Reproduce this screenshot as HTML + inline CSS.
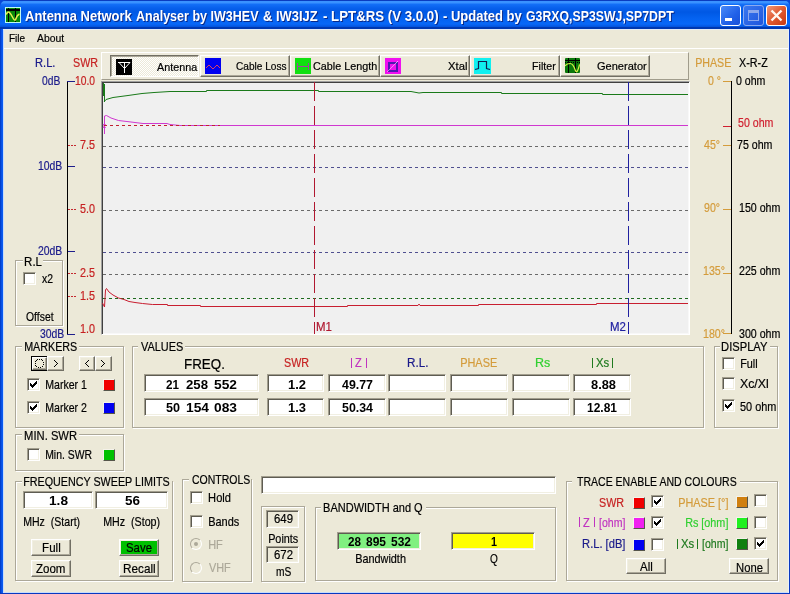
<!DOCTYPE html>
<html><head><meta charset="utf-8">
<style>
*{margin:0;padding:0;box-sizing:border-box}
html,body{width:790px;height:594px;overflow:hidden;background:#ECE9D8}
body{position:relative;font-family:"Liberation Sans",sans-serif;font-size:11px;color:#000}
.a{position:absolute}
svg text{font-family:"Liberation Sans",sans-serif}
#txt{will-change:transform}
.gb{position:absolute;border:1px solid #ACA899;box-shadow:inset 1px 1px 0 #fff,1px 1px 0 #fff}
.gc{position:absolute;background:#ECE9D8;height:4px}
.sk{position:absolute;background:#fff;border-style:solid;border-width:1px;border-color:#A29E8E #fff #fff #A29E8E;box-shadow:inset 1px 1px 0 #5E5C52,inset -1px -1px 0 #F1EFE2}
.bt{position:absolute;background:#ECE9D8;border-style:solid;border-width:1px;border-color:#fff #716F64 #716F64 #fff;box-shadow:inset -1px -1px 0 #ACA899,inset 1px 1px 0 #F1EFE2}
.cb{position:absolute;width:13px;height:13px;background:#fff;border-style:solid;border-width:1px;border-color:#A29E8E #fff #fff #A29E8E;box-shadow:inset 1px 1px 0 #5E5C52,inset -1px -1px 0 #F1EFE2}
.sw{position:absolute;width:12px;height:12px;border-style:solid;border-width:1px;border-color:#F4F2EA #55554A #55554A #F4F2EA}
</style></head><body>

<!-- window frame -->
<div class="a" style="left:0;top:0;width:790px;height:594px;background:#0848D8"></div>
<div class="a" style="left:0;top:29px;width:3px;height:565px;background:linear-gradient(90deg,#0036C0,#0A5AF0 2px)"></div>
<div class="a" style="left:3px;top:29px;width:1px;height:564px;background:#C8DCFA"></div>
<div class="a" style="left:3px;top:592px;width:786px;height:1px;background:#C8DCFA"></div>
<div class="a" style="left:788px;top:29px;width:1px;height:564px;background:#E8F0FA"></div>
<div class="a" style="left:0;top:593px;width:790px;height:1px;background:#0838C0"></div>
<div class="a" style="left:789px;top:29px;width:1px;height:565px;background:#0838C0"></div>
<div class="a" style="left:4px;top:29px;width:784px;height:563px;background:#ECE9D8"></div>
<div class="a" style="left:3px;top:29px;width:786px;height:1px;background:#E4ECF8"></div>

<!-- title bar -->
<div class="a" style="left:0;top:0;width:790px;height:29px;border-radius:7px 7px 0 0;background:linear-gradient(#0A3CC0 0,#0A3CC0 1px,#3A92FF 1px,#3A92FF 3px,#1470F8 4px,#0860EC 8px,#0058E4 12px,#0462F0 18px,#0868F8 24px,#0456E0 26.5px,#0038B0 27px,#0038B0 29px)"></div>
<!-- app icon -->
<svg class="a" style="left:5px;top:7px" width="16" height="16" shape-rendering="crispEdges"><rect x="0" y="0" width="16" height="16" fill="#C0F8F0"/><rect x="1" y="1" width="14" height="14" fill="#0A8A0A"/><path d="M3 1h1v14h-1zM10 1h1v14h-1zM1 2h14v2h-14z" fill="#000"/></svg>
<svg class="a" style="left:5px;top:7px" width="16" height="16"><path d="M1 7.5Q3 4 4.5 5.5T8 11T11 11.5T14.5 7" stroke="#E8F050" fill="none" stroke-width="1.5"/></svg>
<!-- title buttons -->
<div class="a" style="left:720px;top:5px;width:21px;height:21px;border:1px solid #fff;border-radius:3px;background:linear-gradient(135deg,#4A8AF8,#2060E8 60%,#1850D8)"></div>
<div class="a" style="left:725px;top:18px;width:7px;height:3px;background:#fff"></div>
<div class="a" style="left:743px;top:5px;width:21px;height:21px;border:1px solid #8AAAF0;border-radius:3px;background:linear-gradient(135deg,#3A78F0,#1E55DC)"></div>
<div class="a" style="left:748px;top:10px;width:11px;height:11px;border:1px solid #8CA8EC;border-top-width:3px"></div>
<div class="a" style="left:766px;top:5px;width:21px;height:21px;border:1px solid #fff;border-radius:3px;background:linear-gradient(135deg,#F09878,#E05A30 50%,#C83810)"></div>
<svg class="a" style="left:766px;top:5px" width="21" height="21"><path d="M5.5 5.5L15.5 15.5M15.5 5.5L5.5 15.5" stroke="#FFF8F0" stroke-width="2.4"/></svg>

<!-- menu separator -->
<div class="a" style="left:4px;top:48px;width:784px;height:1px;background:#fff"></div>

<!-- ===== CHART LEFT AXIS ===== -->
<div class="a" style="left:67px;top:81px;width:1px;height:254px;background:#000"></div>
<div class="a" style="left:67px;top:81px;width:8px;height:1px;background:#1E1E8C"></div>
<div class="a" style="left:68px;top:166px;width:7px;height:1px;background:#1E1E8C"></div>
<div class="a" style="left:68px;top:251px;width:7px;height:1px;background:#1E1E8C"></div>
<div class="a" style="left:67px;top:334px;width:8px;height:1px;background:#1E1E8C"></div>
<svg class="a" style="left:67px;top:140px" width="10" height="170"><g stroke="#C42A30" stroke-width="1" stroke-dasharray="2 1"><path d="M1 5.5H9M1 69.5H9M1 133.5H9M1 156.5H9"/></g></svg>

<!-- R.L offset group -->
<div class="gb" style="left:15px;top:260px;width:48px;height:66px"></div>
<div class="gc" style="left:23px;top:259px;width:20px"></div>
<div class="cb" style="left:23px;top:272px"></div>

<!-- toolbar -->
<div class="a" style="left:101px;top:52px;width:588px;height:28px;border-style:solid;border-width:1px;border-color:#FFFFFF #A09C8C #A09C8C #FFFFFF;background:#EEEBDD"></div>
<div class="a" style="left:110px;top:55px;width:89px;height:22px;border-style:solid;border-width:1px;border-color:#716F64 #fff #fff #716F64;box-shadow:inset 1px 1px 0 #ACA899;background:repeating-conic-gradient(#fff 0 25%,#ECE9D8 0 50%) 0 0/2px 2px"></div>
<div class="bt" style="left:200px;top:55px;width:90px;height:22px"></div>
<div class="bt" style="left:290px;top:55px;width:90px;height:22px"></div>
<div class="bt" style="left:380px;top:55px;width:90px;height:22px"></div>
<div class="bt" style="left:470px;top:55px;width:90px;height:22px"></div>
<div class="bt" style="left:560px;top:55px;width:90px;height:22px"></div>
<!-- icons -->
<svg class="a" style="left:116px;top:59px" width="16" height="16"><rect width="16" height="16" fill="#000"/><path d="M2 3.5H14M8.5 3V14M3 3.5L8.5 9.5L14 3.5" stroke="#fff" fill="none" stroke-width="1"/></svg>
<svg class="a" style="left:205px;top:58px" width="16" height="16"><rect width="16" height="16" fill="#0000F0"/><path d="M1 10L4 7L8 11L12 7L15 10" stroke="#E04060" fill="none" stroke-width="1"/></svg>
<svg class="a" style="left:295px;top:58px" width="16" height="16"><rect width="16" height="16" fill="#10E010"/><path d="M2.5 5V12M13.5 5V12M2 8.5H14" stroke="#A040A0" fill="none" stroke-width="1"/></svg>
<svg class="a" style="left:385px;top:58px" width="16" height="16"><rect width="16" height="16" fill="#F010F0"/><rect x="4" y="5" width="8" height="8" fill="none" stroke="#5018B0" stroke-width="2"/><path d="M2.5 13.5L13 3" stroke="#FFE8FF" stroke-width="1" stroke-dasharray="1 0.5"/></svg>
<svg class="a" style="left:474px;top:58px" width="17" height="16"><rect width="17" height="16" fill="#10F0F0"/><path d="M1 11.5L4.5 10.5V3.5H12.5V10.5L16 11.5" stroke="#102050" fill="none" stroke-width="1.2"/></svg>
<svg class="a" style="left:565px;top:58px" width="15" height="15"><rect width="15" height="15" rx="1" fill="#0A780A"/><path d="M3.5 0V15M10.5 0V15M0 2.5H15" stroke="#000" stroke-width="1"/><path d="M0 4.5H15" stroke="#000" stroke-width="1" stroke-dasharray="1 1"/><path d="M0 8Q2 5.5 5 5.5T10 11.5T14.5 6.5" stroke="#D8F048" fill="none" stroke-width="1.2"/></svg>

<!-- plot -->
<div class="a" style="left:101px;top:81px;width:589px;height:254px;border-style:solid;border-width:1px;border-color:#A0A0A0 #fff #fff #A0A0A0;box-shadow:inset 1px 1px 0 #404040,inset -1px -1px 0 #F8F8F8;background:#F0F0F0"></div>
<svg class="a" style="left:0;top:0" width="790" height="594" shape-rendering="crispEdges">
<g stroke-width="1" fill="none" stroke-dasharray="3 3">
<path d="M103 146.5H688" stroke="#6A6A6A"/>
<path d="M103 167.5H688" stroke="#505090"/>
<path d="M103 210.5H688" stroke="#6A6A6A"/>
<path d="M103 252.5H688" stroke="#505090"/>
<path d="M103 274.5H688" stroke="#6A6A6A"/>
<path d="M103 298.5H688" stroke="#1E6A1E"/>
</g>
</svg>
<svg class="a" style="left:0;top:0" width="790" height="594">
<g stroke-width="1" fill="none" stroke-linejoin="miter">
<path d="M103.5 83V96M104.5 84V102M104 102L106 99.5L113 97.5L128 95.5L142 93.5L154 92.5L170 91.5H206.5V90.5H318.5V91.5H411L419 93L423 92.5H501.5V93.5H602.5V94.5H688" stroke="#1A7A1A"/>
<path d="M104.5 134V116L106.5 115.5L111 118L118.5 120.5L131 122L143 123.5L167 123.5L170 124.5L180 125.5H688M103 124L105.5 128M105.5 124L103 128" stroke="#D038D0"/>
<path d="M102.5 303L104.5 307L105.5 290L106.5 288.5L109 292L113 295L118.5 298L124 299.5L129 301.5L135 302.5L142.5 303.5L152.5 304.5H167.5V305.5H200.5V306.5H347.5V305.5H418L419 304L420 305.5H478.5V304.5H596.5V303.5H688" stroke="#C81E30"/>
</g>
<path d="M104 125.5H220" stroke="#C02030" stroke-dasharray="3 3" shape-rendering="crispEdges"/>
<g stroke-width="1" fill="none" stroke-dasharray="19 5" shape-rendering="crispEdges">
<path d="M314.5 82V334" stroke="#B01830"/>
<path d="M628.5 82V334" stroke="#2020A0"/>
</g>
</svg>

<!-- ===== RIGHT AXIS ===== -->
<div class="a" style="left:731px;top:81px;width:1px;height:253px;background:#000"></div>
<div class="a" style="left:723px;top:81px;width:8px;height:1px;background:#D49C3C"></div>
<div class="a" style="left:723px;top:145px;width:8px;height:1px;background:#D49C3C"></div>
<div class="a" style="left:723px;top:209px;width:8px;height:1px;background:#D49C3C"></div>
<div class="a" style="left:723px;top:273px;width:8px;height:1px;background:#D49C3C"></div>
<div class="a" style="left:723px;top:333px;width:8px;height:1px;background:#D49C3C"></div>
<div class="a" style="left:723px;top:126px;width:8px;height:1px;background:#D02030"></div>

<!-- ===== MARKERS ===== -->
<div class="gb" style="left:15px;top:346px;width:109px;height:82px"></div>
<div class="gc" style="left:22px;top:345px;width:57px"></div>
<div class="a" style="left:31px;top:356px;width:17px;height:15px;border:1px solid #000;background:#ECE9D8"></div>
<div class="bt" style="left:32px;top:357px;width:15px;height:13px"></div>
<div class="bt" style="left:47px;top:356px;width:17px;height:15px"></div>
<div class="bt" style="left:79px;top:356px;width:16px;height:15px"></div>
<div class="bt" style="left:95px;top:356px;width:17px;height:15px"></div>
<svg class="a" style="left:0;top:0" width="130" height="380" shape-rendering="crispEdges"><path d="M54 360h1v1h-1zM55 361h1v1h-1zM56 362h1v1h-1zM57 363h1v1h-1zM56 364h1v1h-1zM55 365h1v1h-1zM54 366h1v1h-1zM88 360h1v1h-1zM87 361h1v1h-1zM86 362h1v1h-1zM85 363h1v1h-1zM86 364h1v1h-1zM87 365h1v1h-1zM88 366h1v1h-1zM101 360h1v1h-1zM102 361h1v1h-1zM103 362h1v1h-1zM104 363h1v1h-1zM103 364h1v1h-1zM102 365h1v1h-1zM101 366h1v1h-1zM37 359h1v1h-1zM39 359h1v1h-1zM41 359h1v1h-1zM35 361h1v1h-1zM36 360h1v1h-1zM42 360h1v1h-1zM43 362h1v1h-1zM43 364h1v1h-1zM35 363h1v1h-1zM35 365h1v1h-1zM36 366h1v1h-1zM42 366h1v1h-1zM38 367h1v1h-1zM40 367h1v1h-1z" fill="#000"/></svg>
<div class="cb" style="left:27px;top:378px"></div>
<div class="cb" style="left:27px;top:401px"></div>
<div class="sw" style="left:103px;top:379px;background:#F00000"></div>
<div class="sw" style="left:103px;top:402px;background:#0000F0"></div>

<!-- MIN SWR -->
<div class="gb" style="left:15px;top:434px;width:109px;height:37px"></div>
<div class="gc" style="left:22px;top:433px;width:57px"></div>
<div class="cb" style="left:27px;top:448px"></div>
<div class="sw" style="left:103px;top:449px;background:#00C000"></div>

<!-- VALUES -->
<div class="gb" style="left:132px;top:346px;width:572px;height:82px"></div>
<div class="gc" style="left:138px;top:345px;width:47px"></div>
<div class="sk" style="left:144px;top:374px;width:115px;height:18px"></div>
<div class="sk" style="left:144px;top:398px;width:115px;height:18px"></div>
<div class="sk" style="left:267px;top:374px;width:57px;height:18px"></div>
<div class="sk" style="left:267px;top:398px;width:57px;height:18px"></div>
<div class="sk" style="left:328px;top:374px;width:58px;height:18px"></div>
<div class="sk" style="left:328px;top:398px;width:58px;height:18px"></div>
<div class="sk" style="left:388px;top:374px;width:58px;height:18px"></div>
<div class="sk" style="left:388px;top:398px;width:58px;height:18px"></div>
<div class="sk" style="left:450px;top:374px;width:58px;height:18px"></div>
<div class="sk" style="left:450px;top:398px;width:58px;height:18px"></div>
<div class="sk" style="left:512px;top:374px;width:58px;height:18px"></div>
<div class="sk" style="left:512px;top:398px;width:58px;height:18px"></div>
<div class="sk" style="left:573px;top:374px;width:58px;height:18px"></div>
<div class="sk" style="left:573px;top:398px;width:58px;height:18px"></div>

<!-- DISPLAY -->
<div class="gb" style="left:714px;top:346px;width:64px;height:82px"></div>
<div class="gc" style="left:720px;top:345px;width:50px"></div>
<div class="cb" style="left:722px;top:357px"></div>
<div class="cb" style="left:722px;top:377px"></div>
<div class="cb" style="left:722px;top:399px"></div>

<!-- FREQUENCY SWEEP LIMITS -->
<div class="gb" style="left:15px;top:481px;width:158px;height:100px"></div>
<div class="gc" style="left:22px;top:480px;width:150px"></div>
<div class="sk" style="left:23px;top:491px;width:70px;height:18px"></div>
<div class="sk" style="left:95px;top:491px;width:73px;height:18px"></div>
<div class="bt" style="left:31px;top:539px;width:40px;height:17px"></div>
<div class="bt" style="left:31px;top:560px;width:40px;height:17px"></div>
<div class="bt" style="left:119px;top:539px;width:40px;height:17px;background:#00C000"></div>
<div class="bt" style="left:119px;top:560px;width:40px;height:17px"></div>

<!-- CONTROLS -->
<div class="gb" style="left:182px;top:479px;width:70px;height:103px"></div>
<div class="gc" style="left:189px;top:478px;width:62px"></div>
<div class="cb" style="left:190px;top:491px"></div>
<div class="cb" style="left:190px;top:515px"></div>
<div class="a" style="left:190px;top:538px;width:12px;height:12px;border-radius:50%;border:1px solid;border-color:#ACA899 #fff #fff #ACA899;background:#ECE9D8"></div>
<div class="a" style="left:194px;top:542px;width:4px;height:4px;border-radius:50%;background:#ACA899"></div>
<div class="a" style="left:190px;top:562px;width:12px;height:12px;border-radius:50%;border:1px solid;border-color:#ACA899 #fff #fff #ACA899;background:#ECE9D8"></div>

<!-- long textbox -->
<div class="sk" style="left:261px;top:476px;width:295px;height:18px"></div>

<!-- points -->
<div class="gb" style="left:261px;top:506px;width:44px;height:76px"></div>
<div class="sk" style="left:266px;top:510px;width:33px;height:18px;background:#ECE9D8"></div>
<div class="sk" style="left:266px;top:546px;width:33px;height:17px;background:#ECE9D8"></div>

<!-- BANDWIDTH -->
<div class="gb" style="left:315px;top:507px;width:241px;height:74px"></div>
<div class="gc" style="left:321px;top:506px;width:105px"></div>
<div class="sk" style="left:337px;top:532px;width:84px;height:18px;background:#80F080"></div>
<div class="sk" style="left:451px;top:532px;width:84px;height:18px;background:#FFFF00"></div>

<!-- TRACE ENABLE -->
<div class="gb" style="left:566px;top:481px;width:212px;height:100px"></div>
<div class="gc" style="left:572px;top:480px;width:168px"></div>
<div class="sw" style="left:633px;top:497px;background:#F00000"></div>
<div class="sw" style="left:633px;top:517px;background:#F020F0"></div>
<div class="sw" style="left:633px;top:539px;background:#0000F0"></div>
<div class="sw" style="left:736px;top:496px;background:#D08010"></div>
<div class="sw" style="left:736px;top:517px;background:#20F020"></div>
<div class="sw" style="left:736px;top:538px;background:#108010"></div>
<div class="cb" style="left:651px;top:495px"></div>
<div class="cb" style="left:651px;top:516px"></div>
<div class="cb" style="left:651px;top:538px"></div>
<div class="cb" style="left:754px;top:494px"></div>
<div class="cb" style="left:754px;top:516px"></div>
<div class="cb" style="left:754px;top:537px"></div>
<div class="bt" style="left:626px;top:558px;width:40px;height:16px"></div>
<div class="bt" style="left:729px;top:558px;width:40px;height:16px"></div>

<!-- check marks -->
<svg class="a" style="left:0;top:0" width="790" height="594" shape-rendering="crispEdges"><path transform="translate(30 381)" d="M6 0h1v1h-1zM5 1h2v1h-2zM0 2h1v1h-1zM4 2h3v1h-3zM0 3h2v1h-2zM3 3h3v1h-3zM0 4h5v1h-5zM1 5h3v1h-3zM2 6h1v1h-1z" fill="#000"/><path transform="translate(30 404)" d="M6 0h1v1h-1zM5 1h2v1h-2zM0 2h1v1h-1zM4 2h3v1h-3zM0 3h2v1h-2zM3 3h3v1h-3zM0 4h5v1h-5zM1 5h3v1h-3zM2 6h1v1h-1z" fill="#000"/><path transform="translate(725 402)" d="M6 0h1v1h-1zM5 1h2v1h-2zM0 2h1v1h-1zM4 2h3v1h-3zM0 3h2v1h-2zM3 3h3v1h-3zM0 4h5v1h-5zM1 5h3v1h-3zM2 6h1v1h-1z" fill="#000"/><path transform="translate(654 498)" d="M6 0h1v1h-1zM5 1h2v1h-2zM0 2h1v1h-1zM4 2h3v1h-3zM0 3h2v1h-2zM3 3h3v1h-3zM0 4h5v1h-5zM1 5h3v1h-3zM2 6h1v1h-1z" fill="#000"/><path transform="translate(654 519)" d="M6 0h1v1h-1zM5 1h2v1h-2zM0 2h1v1h-1zM4 2h3v1h-3zM0 3h2v1h-2zM3 3h3v1h-3zM0 4h5v1h-5zM1 5h3v1h-3zM2 6h1v1h-1z" fill="#000"/><path transform="translate(757 540)" d="M6 0h1v1h-1zM5 1h2v1h-2zM0 2h1v1h-1zM4 2h3v1h-3zM0 3h2v1h-2zM3 3h3v1h-3zM0 4h5v1h-5zM1 5h3v1h-3zM2 6h1v1h-1z" fill="#000"/></svg>

<!-- abs bars -->
<div class="a" style="left:351px;top:358px;width:1px;height:10px;background:#C034C0"></div>
<div class="a" style="left:366px;top:358px;width:1px;height:10px;background:#C034C0"></div>
<div class="a" style="left:592px;top:358px;width:1px;height:10px;background:#1F7A1F"></div>
<div class="a" style="left:612px;top:358px;width:1px;height:10px;background:#1F7A1F"></div>
<div class="a" style="left:579px;top:517px;width:1px;height:10px;background:#C034C0"></div>
<div class="a" style="left:594px;top:517px;width:1px;height:10px;background:#C034C0"></div>
<div class="a" style="left:677px;top:539px;width:1px;height:10px;background:#1F7A1F"></div>
<div class="a" style="left:697px;top:539px;width:1px;height:10px;background:#1F7A1F"></div>
<svg class="a" id="txt" style="left:0;top:0" width="790" height="594" xml:space="preserve"><text transform="translate(26.00 22) scale(0.9267 1)" style="font-size:14.03px;fill:#fff;stroke:#fff;stroke-width:0;font-weight:bold;fill:#0A2A8A">Antenna Network</text>
<text transform="translate(25.00 21) scale(0.9267 1)" style="font-size:14.03px;fill:#fff;stroke:#fff;stroke-width:0;font-weight:bold">Antenna Network</text>
<text transform="translate(137.00 22) scale(0.8930 1)" style="font-size:14.03px;fill:#fff;stroke:#fff;stroke-width:0;font-weight:bold;fill:#0A2A8A">Analyser by IW3HEV</text>
<text transform="translate(136.00 21) scale(0.8930 1)" style="font-size:14.03px;fill:#fff;stroke:#fff;stroke-width:0;font-weight:bold">Analyser by IW3HEV</text>
<text transform="translate(264.00 22) scale(0.9225 1)" style="font-size:14.03px;fill:#fff;stroke:#fff;stroke-width:0;font-weight:bold;fill:#0A2A8A">&amp; IW3IJZ</text>
<text transform="translate(263.00 21) scale(0.9225 1)" style="font-size:14.03px;fill:#fff;stroke:#fff;stroke-width:0;font-weight:bold">&amp; IW3IJZ</text>
<text transform="translate(324.00 22) scale(0.9457 1)" style="font-size:14.03px;fill:#fff;stroke:#fff;stroke-width:0;font-weight:bold;fill:#0A2A8A">- LPT&amp;RS (V 3.0.0)</text>
<text transform="translate(323.00 21) scale(0.9457 1)" style="font-size:14.03px;fill:#fff;stroke:#fff;stroke-width:0;font-weight:bold">- LPT&amp;RS (V 3.0.0)</text>
<text transform="translate(444.00 22) scale(0.9285 1)" style="font-size:14.03px;fill:#fff;stroke:#fff;stroke-width:0;font-weight:bold;fill:#0A2A8A">- Updated by</text>
<text transform="translate(443.00 21) scale(0.9285 1)" style="font-size:14.03px;fill:#fff;stroke:#fff;stroke-width:0;font-weight:bold">- Updated by</text>
<text transform="translate(527.00 22) scale(0.8774 1)" style="font-size:14.03px;fill:#fff;stroke:#fff;stroke-width:0;font-weight:bold;fill:#0A2A8A">G3RXQ,SP3SWJ,SP7DPT</text>
<text transform="translate(526.00 21) scale(0.8774 1)" style="font-size:14.03px;fill:#fff;stroke:#fff;stroke-width:0;font-weight:bold">G3RXQ,SP3SWJ,SP7DPT</text>
<text transform="translate(9.00 42) scale(0.9020 1)" style="font-size:11.13px;fill:#000;stroke:#000;stroke-width:0.2">File</text>
<text transform="translate(37.00 42) scale(0.9339 1)" style="font-size:11.13px;fill:#000;stroke:#000;stroke-width:0.2">About</text>
<text transform="translate(35.12 67) scale(0.8807 1)" style="font-size:12.58px;fill:#1A1A8A;stroke:#1A1A8A;stroke-width:0.2">R.L.</text>
<text transform="translate(73.00 67) scale(0.8544 1)" style="font-size:12.58px;fill:#C62222;stroke:#C62222;stroke-width:0.2">SWR</text>
<text transform="translate(42.00 85) scale(0.8185 1)" style="font-size:12.58px;fill:#1A1A8A;stroke:#1A1A8A;stroke-width:0.2">0dB</text>
<text transform="translate(38.00 170) scale(0.8280 1)" style="font-size:12.58px;fill:#1A1A8A;stroke:#1A1A8A;stroke-width:0.2">10dB</text>
<text transform="translate(38.00 255) scale(0.8280 1)" style="font-size:12.58px;fill:#1A1A8A;stroke:#1A1A8A;stroke-width:0.2">20dB</text>
<text transform="translate(40.00 338) scale(0.8280 1)" style="font-size:12.58px;fill:#1A1A8A;stroke:#1A1A8A;stroke-width:0.2">30dB</text>
<text transform="translate(75.00 85) scale(0.8168 1)" style="font-size:12.58px;fill:#C62222;stroke:#C62222;stroke-width:0.2">10.0</text>
<text transform="translate(80.00 149) scale(0.8576 1)" style="font-size:12.58px;fill:#C62222;stroke:#C62222;stroke-width:0.2">7.5</text>
<text transform="translate(80.00 213) scale(0.8576 1)" style="font-size:12.58px;fill:#C62222;stroke:#C62222;stroke-width:0.2">5.0</text>
<text transform="translate(80.00 277) scale(0.8576 1)" style="font-size:12.58px;fill:#C62222;stroke:#C62222;stroke-width:0.2">2.5</text>
<text transform="translate(80.00 300) scale(0.8576 1)" style="font-size:12.58px;fill:#C62222;stroke:#C62222;stroke-width:0.2">1.5</text>
<text transform="translate(80.00 333) scale(0.8576 1)" style="font-size:12.58px;fill:#C62222;stroke:#C62222;stroke-width:0.2">1.0</text>
<text transform="translate(24.08 266) scale(0.9151 1)" style="font-size:12.58px;fill:#000;stroke:#000;stroke-width:0.2">R.L</text>
<text transform="translate(42.00 283) scale(0.8277 1)" style="font-size:12.58px;fill:#000;stroke:#000;stroke-width:0.2">x2</text>
<text transform="translate(26.00 321) scale(0.8277 1)" style="font-size:12.58px;fill:#000;stroke:#000;stroke-width:0.2">Offset</text>
<text transform="translate(157.00 71) scale(0.9702 1)" style="font-size:11.13px;fill:#000;stroke:#000;stroke-width:0.2">Antenna</text>
<text transform="translate(236.00 70) scale(0.9092 1)" style="font-size:11.13px;fill:#000;stroke:#000;stroke-width:0.2">Cable Loss</text>
<text transform="translate(313.00 70) scale(0.9697 1)" style="font-size:11.13px;fill:#000;stroke:#000;stroke-width:0.2">Cable Length</text>
<text transform="translate(448.00 70) scale(1.0161 1)" style="font-size:11.13px;fill:#000;stroke:#000;stroke-width:0.2">Xtal</text>
<text transform="translate(532.00 70) scale(0.9594 1)" style="font-size:11.13px;fill:#000;stroke:#000;stroke-width:0.2">Filter</text>
<text transform="translate(597.00 70) scale(0.9924 1)" style="font-size:11.13px;fill:#000;stroke:#000;stroke-width:0.2">Generator</text>
<text transform="translate(316.09 331) scale(0.9103 1)" style="font-size:12.58px;fill:#B01830;stroke:#B01830;stroke-width:0.2">M1</text>
<text transform="translate(610.09 331) scale(0.9103 1)" style="font-size:12.58px;fill:#2020A0;stroke:#2020A0;stroke-width:0.2">M2</text>
<text transform="translate(695.15 67) scale(0.8484 1)" style="font-size:12.58px;fill:#D49C3C;stroke:#D49C3C;stroke-width:0.2">PHASE</text>
<text transform="translate(739.00 67) scale(0.8567 1)" style="font-size:12.58px;fill:#000;stroke:#000;stroke-width:0.2">X-R-Z</text>
<text transform="translate(708.00 85) scale(0.8393 1)" style="font-size:12.58px;fill:#D49C3C;stroke:#D49C3C;stroke-width:0.2">0 °</text>
<text transform="translate(704.00 149) scale(0.8425 1)" style="font-size:12.58px;fill:#D49C3C;stroke:#D49C3C;stroke-width:0.2">45°</text>
<text transform="translate(704.00 212) scale(0.8425 1)" style="font-size:12.58px;fill:#D49C3C;stroke:#D49C3C;stroke-width:0.2">90°</text>
<text transform="translate(703.00 275) scale(0.8466 1)" style="font-size:12.58px;fill:#D49C3C;stroke:#D49C3C;stroke-width:0.2">135°</text>
<text transform="translate(703.00 338) scale(0.8466 1)" style="font-size:12.58px;fill:#D49C3C;stroke:#D49C3C;stroke-width:0.2">180°</text>
<text transform="translate(736.00 85) scale(0.8411 1)" style="font-size:12.58px;fill:#000;stroke:#000;stroke-width:0.2">0 ohm</text>
<text transform="translate(738.00 127) scale(0.8439 1)" style="font-size:12.58px;fill:#D02030;stroke:#D02030;stroke-width:0.2">50 ohm</text>
<text transform="translate(737.00 149) scale(0.8439 1)" style="font-size:12.58px;fill:#000;stroke:#000;stroke-width:0.2">75 ohm</text>
<text transform="translate(739.00 212) scale(0.8459 1)" style="font-size:12.58px;fill:#000;stroke:#000;stroke-width:0.2">150 ohm</text>
<text transform="translate(739.00 275) scale(0.8459 1)" style="font-size:12.58px;fill:#000;stroke:#000;stroke-width:0.2">225 ohm</text>
<text transform="translate(739.00 338) scale(0.8459 1)" style="font-size:12.58px;fill:#000;stroke:#000;stroke-width:0.2">300 ohm</text>
<text transform="translate(24.14 351) scale(0.8551 1)" style="font-size:12.58px;fill:#000;stroke:#000;stroke-width:0.2">MARKERS</text>
<text transform="translate(45.16 389) scale(0.8431 1)" style="font-size:12.58px;fill:#000;stroke:#000;stroke-width:0.2">Marker 1</text>
<text transform="translate(45.16 412) scale(0.8431 1)" style="font-size:12.58px;fill:#000;stroke:#000;stroke-width:0.2">Marker 2</text>
<text transform="translate(24.11 440) scale(0.8918 1)" style="font-size:12.58px;fill:#000;stroke:#000;stroke-width:0.2">MIN. SWR</text>
<text transform="translate(45.17 459) scale(0.8286 1)" style="font-size:12.58px;fill:#000;stroke:#000;stroke-width:0.2">Min. SWR</text>
<text transform="translate(141.00 351) scale(0.8693 1)" style="font-size:12.58px;fill:#000;stroke:#000;stroke-width:0.2">VALUES</text>
<text transform="translate(184.05 369) scale(0.9528 1)" style="font-size:14.03px;fill:#000;stroke:#000;stroke-width:0.2">FREQ.</text>
<text transform="translate(284.00 367) scale(0.8544 1)" style="font-size:12.58px;fill:#C62222;stroke:#C62222;stroke-width:0.2">SWR</text>
<text transform="translate(355.00 367) scale(0.8750 1)" style="font-size:12.58px;fill:#C034C0;stroke:#C034C0;stroke-width:0.2">Z</text>
<text transform="translate(407.07 367) scale(0.9271 1)" style="font-size:12.58px;fill:#1A1A8A;stroke:#1A1A8A;stroke-width:0.2">R.L.</text>
<text transform="translate(460.13 367) scale(0.8727 1)" style="font-size:12.58px;fill:#D49C3C;stroke:#D49C3C;stroke-width:0.2">PHASE</text>
<text transform="translate(535.01 367) scale(0.9941 1)" style="font-size:12.58px;fill:#30D030;stroke:#30D030;stroke-width:0.2">Rs</text>
<text transform="translate(596.00 367) scale(0.9034 1)" style="font-size:12.58px;fill:#1F7A1F;stroke:#1F7A1F;stroke-width:0.2">Xs</text>
<text transform="translate(166.00 389) scale(0.9289 1)" style="font-size:12.58px;fill:#000;stroke:#000;stroke-width:0;font-weight:bold">21</text>
<text transform="translate(186.00 389) scale(1.0481 1)" style="font-size:12.58px;fill:#000;stroke:#000;stroke-width:0;font-weight:bold">258</text>
<text transform="translate(214.00 389) scale(1.0957 1)" style="font-size:12.58px;fill:#000;stroke:#000;stroke-width:0;font-weight:bold">552</text>
<text transform="translate(166.00 412) scale(1.0003 1)" style="font-size:12.58px;fill:#000;stroke:#000;stroke-width:0;font-weight:bold">50</text>
<text transform="translate(186.00 412) scale(1.0957 1)" style="font-size:12.58px;fill:#000;stroke:#000;stroke-width:0;font-weight:bold">154</text>
<text transform="translate(214.00 412) scale(1.0957 1)" style="font-size:12.58px;fill:#000;stroke:#000;stroke-width:0;font-weight:bold">083</text>
<text transform="translate(288.00 389) scale(1.0292 1)" style="font-size:12.58px;fill:#000;stroke:#000;stroke-width:0;font-weight:bold">1.2</text>
<text transform="translate(288.00 412) scale(1.0292 1)" style="font-size:12.58px;fill:#000;stroke:#000;stroke-width:0;font-weight:bold">1.3</text>
<text transform="translate(342.00 389) scale(0.9847 1)" style="font-size:12.58px;fill:#000;stroke:#000;stroke-width:0;font-weight:bold">49.77</text>
<text transform="translate(342.00 412) scale(0.9847 1)" style="font-size:12.58px;fill:#000;stroke:#000;stroke-width:0;font-weight:bold">50.34</text>
<text transform="translate(591.00 389) scale(1.0210 1)" style="font-size:12.58px;fill:#000;stroke:#000;stroke-width:0;font-weight:bold">8.88</text>
<text transform="translate(587.00 412) scale(0.9530 1)" style="font-size:12.58px;fill:#000;stroke:#000;stroke-width:0;font-weight:bold">12.81</text>
<text transform="translate(721.11 351) scale(0.8879 1)" style="font-size:12.58px;fill:#000;stroke:#000;stroke-width:0.2">DISPLAY</text>
<text transform="translate(740.13 368) scale(0.8661 1)" style="font-size:12.58px;fill:#000;stroke:#000;stroke-width:0.2">Full</text>
<text transform="translate(740.00 388) scale(0.9803 1)" style="font-size:12.58px;fill:#000;stroke:#000;stroke-width:0.2">Xc/Xl</text>
<text transform="translate(740.00 411) scale(0.8680 1)" style="font-size:12.58px;fill:#000;stroke:#000;stroke-width:0.2">50 ohm</text>
<text transform="translate(23.14 486) scale(0.8561 1)" style="font-size:12.58px;fill:#000;stroke:#000;stroke-width:0.2">FREQUENCY SWEEP LIMITS</text>
<text transform="translate(49.00 505) scale(1.0863 1)" style="font-size:12.58px;fill:#000;stroke:#000;stroke-width:0;font-weight:bold">1.8</text>
<text transform="translate(125.00 505) scale(1.0718 1)" style="font-size:12.58px;fill:#000;stroke:#000;stroke-width:0;font-weight:bold">56</text>
<text transform="translate(23.16 526) scale(0.8410 1)" style="font-size:12.58px;fill:#000;stroke:#000;stroke-width:0.2">MHz &#160;(Start)</text>
<text transform="translate(103.15 526) scale(0.8497 1)" style="font-size:12.58px;fill:#000;stroke:#000;stroke-width:0.2">MHz &#160;(Stop)</text>
<text transform="translate(42.08 552) scale(0.9203 1)" style="font-size:12.58px;fill:#000;stroke:#000;stroke-width:0.2">Full</text>
<text transform="translate(36.00 573) scale(0.9156 1)" style="font-size:12.58px;fill:#000;stroke:#000;stroke-width:0.2">Zoom</text>
<text transform="translate(126.00 552) scale(0.9067 1)" style="font-size:12.58px;fill:#000;stroke:#000;stroke-width:0.2">Save</text>
<text transform="translate(123.07 573) scale(0.9349 1)" style="font-size:12.58px;fill:#000;stroke:#000;stroke-width:0.2">Recall</text>
<text transform="translate(192.00 484) scale(0.8346 1)" style="font-size:12.58px;fill:#000;stroke:#000;stroke-width:0.2">CONTROLS</text>
<text transform="translate(208.12 502) scale(0.8845 1)" style="font-size:12.58px;fill:#000;stroke:#000;stroke-width:0.2">Hold</text>
<text transform="translate(208.13 526) scale(0.8727 1)" style="font-size:12.58px;fill:#000;stroke:#000;stroke-width:0.2">Bands</text>
<text transform="translate(208.13 549) scale(0.8705 1)" style="font-size:12.58px;fill:#ACA899;stroke:#ACA899;stroke-width:0.2">HF</text>
<text transform="translate(209.00 572) scale(0.8637 1)" style="font-size:12.58px;fill:#ACA899;stroke:#ACA899;stroke-width:0.2">VHF</text>
<text transform="translate(274.00 523) scale(0.9052 1)" style="font-size:12.58px;fill:#000;stroke:#000;stroke-width:0.2">649</text>
<text transform="translate(268.14 543) scale(0.8613 1)" style="font-size:12.58px;fill:#000;stroke:#000;stroke-width:0.2">Points</text>
<text transform="translate(274.00 559) scale(0.9052 1)" style="font-size:12.58px;fill:#000;stroke:#000;stroke-width:0.2">672</text>
<text transform="translate(276.00 576) scale(0.8118 1)" style="font-size:12.58px;fill:#000;stroke:#000;stroke-width:0.2">mS</text>
<text transform="translate(323.12 512) scale(0.8750 1)" style="font-size:12.58px;fill:#000;stroke:#000;stroke-width:0.2">BANDWIDTH and Q</text>
<text transform="translate(348.00 546) scale(0.9289 1)" style="font-size:12.58px;fill:#000;stroke:#000;stroke-width:0;font-weight:bold">28</text>
<text transform="translate(366.00 546) scale(0.9528 1)" style="font-size:12.58px;fill:#000;stroke:#000;stroke-width:0;font-weight:bold">895</text>
<text transform="translate(391.00 546) scale(0.9528 1)" style="font-size:12.58px;fill:#000;stroke:#000;stroke-width:0;font-weight:bold">532</text>
<text transform="translate(491.00 546) scale(0.8571 1)" style="font-size:12.58px;fill:#000;stroke:#000;stroke-width:0;font-weight:bold">1</text>
<text transform="translate(355.13 563) scale(0.8659 1)" style="font-size:12.58px;fill:#000;stroke:#000;stroke-width:0.2">Bandwidth</text>
<text transform="translate(490.00 563) scale(0.8000 1)" style="font-size:12.58px;fill:#000;stroke:#000;stroke-width:0.2">Q</text>
<text transform="translate(577.00 486) scale(0.8372 1)" style="font-size:12.58px;fill:#000;stroke:#000;stroke-width:0.2">TRACE ENABLE AND COLOURS</text>
<text transform="translate(599.00 507) scale(0.8544 1)" style="font-size:12.58px;fill:#C62222;stroke:#C62222;stroke-width:0.2">SWR</text>
<text transform="translate(583.00 527) scale(0.8750 1)" style="font-size:12.58px;fill:#C034C0;stroke:#C034C0;stroke-width:0.2">Z</text>
<text transform="translate(599.00 527) scale(0.8397 1)" style="font-size:12.58px;fill:#C034C0;stroke:#C034C0;stroke-width:0.2">[ohm]</text>
<text transform="translate(582.11 548) scale(0.8853 1)" style="font-size:12.58px;fill:#1A1A8A;stroke:#1A1A8A;stroke-width:0.2">R.L. [dB]</text>
<text transform="translate(678.14 507) scale(0.8648 1)" style="font-size:12.58px;fill:#D49C3C;stroke:#D49C3C;stroke-width:0.2">PHASE [°]</text>
<text transform="translate(685.14 527) scale(0.8601 1)" style="font-size:12.58px;fill:#30D030;stroke:#30D030;stroke-width:0.2">Rs [ohm]</text>
<text transform="translate(681.00 548) scale(0.9034 1)" style="font-size:12.58px;fill:#1F7A1F;stroke:#1F7A1F;stroke-width:0.2">Xs</text>
<text transform="translate(702.00 548) scale(0.8397 1)" style="font-size:12.58px;fill:#1F7A1F;stroke:#1F7A1F;stroke-width:0.2">[ohm]</text>
<text transform="translate(640.00 571) scale(0.9102 1)" style="font-size:12.58px;fill:#000;stroke:#000;stroke-width:0.2">All</text>
<text transform="translate(736.11 572) scale(0.8943 1)" style="font-size:12.58px;fill:#000;stroke:#000;stroke-width:0.2">None</text></svg>
</body></html>
